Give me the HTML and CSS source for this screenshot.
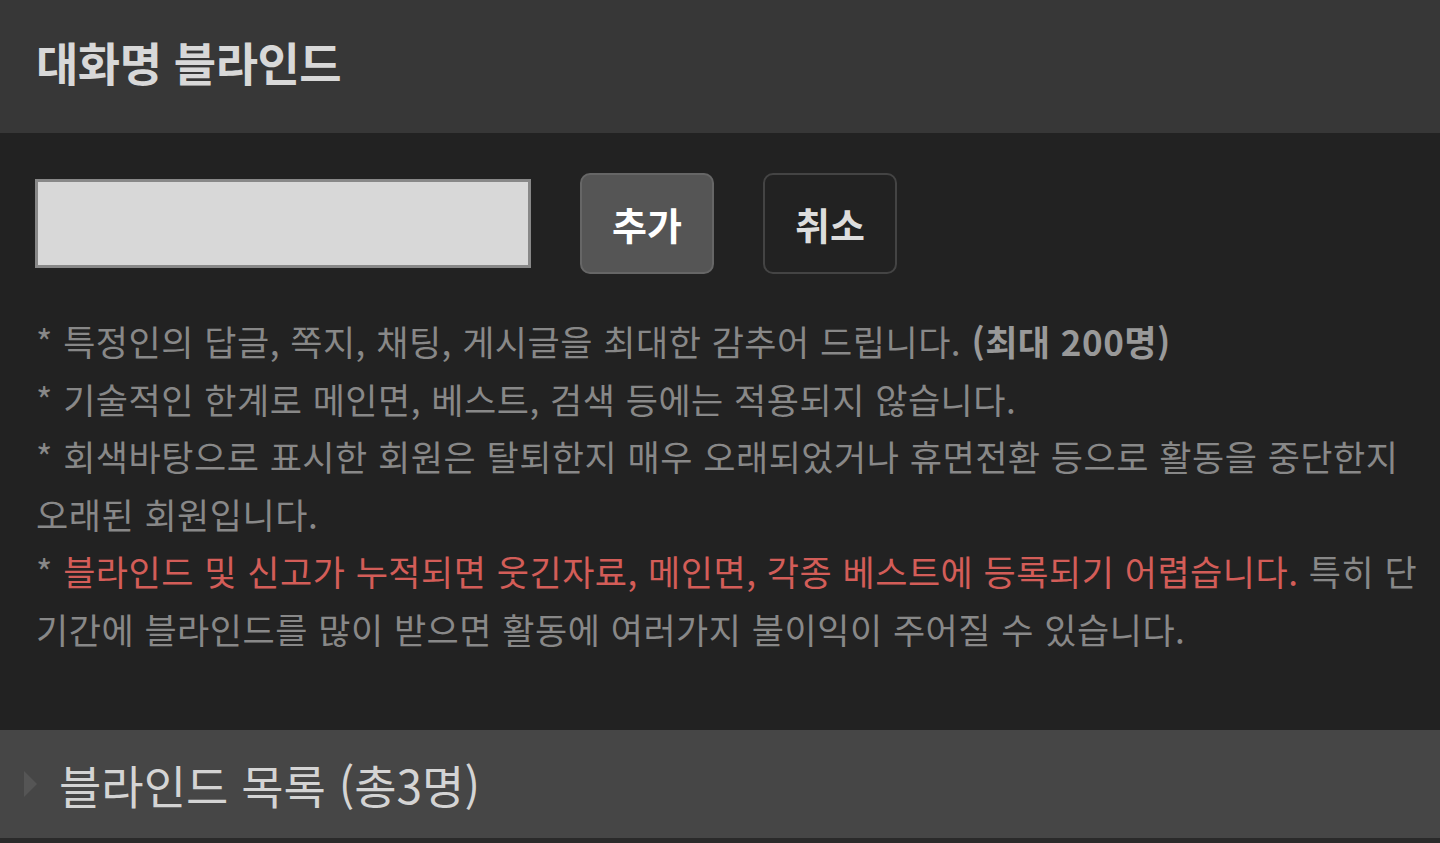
FILE: index.html
```html
<!DOCTYPE html>
<html lang="ko">
  <head>
    <meta charset="UTF-8">
    <title>대화명 블라인드</title>
    <link rel="stylesheet" href="styles.css">
  </head>
  <body>
    <div class="pageHead">대화명 블라인드</div>
    <div class="blindBox">
        <div class="blindForm">
            <input class="blindInput" type="text">
            <button class="btnAdd">추가</button>
            <button class="btnCancel">취소</button>
        </div>
        <div class="blindHelp">
            <p>* 특정인의 답글, 쪽지, 채팅, 게시글을 최대한 감추어 드립니다. <b>(최대 200명)</b></p>
            <p>* 기술적인 한계로 메인면, 베스트, 검색 등에는 적용되지 않습니다.</p>
            <p>* 회색바탕으로 표시한 회원은 탈퇴한지 매우 오래되었거나 휴면전환 등으로 활동을 중단한지 오래된 회원입니다.</p>
            <p>* <span class="warn">블라인드 및 신고가 누적되면 웃긴자료, 메인면, 각종 베스트에 등록되기 어렵습니다.</span> 특히 단기간에 블라인드를 많이 받으면 활동에 여러가지 불이익이 주어질 수 있습니다.</p>
        </div>
    </div>
    <div class="blindList">
        <span class="arrow"></span>
        <span>블라인드 목록 (총3명)</span>
    </div>
  </body>
</html>
```

FILE: styles.css
```css
body {
    margin: 0;
    background: #2a2a2a;
    font-family: "Noto Sans CJK KR", "Noto Sans", sans-serif;
}
.pageHead {
    height: 133px;
    box-sizing: border-box;
    display: flex;
    align-items: center;
    padding: 0 36px 12px 36px;
    background: #373737;
    color: #d8d8d8;
    font-size: 46px;
    font-weight: bold;
    letter-spacing: -0.5px;
}
.blindBox {
    background: #222222;
    padding: 40px 20px 73px 36px;
}
.blindForm {
    display: flex;
    align-items: center;
    gap: 49px;
}
.blindInput {
    width: 496px;
    height: 89px;
    box-sizing: border-box;
    margin: 0 0 0 -1px;
    background: #d8d8d8;
    border: 3px solid #888888;
    border-radius: 0;
}
.blindForm button {
    width: 134px;
    height: 101px;
    border-radius: 10px;
    font-family: "Noto Sans CJK KR", sans-serif;
    font-size: 38px;
    font-weight: bold;
}
.btnAdd {
    background: #555555;
    border: 2px solid #666666;
    color: #ffffff;
}
.btnCancel {
    background: #222222;
    border: 2px solid #444444;
    color: #dddddd;
}
.blindHelp {
    margin-top: 38px;
    color: #888888;
    font-size: 35px;
    line-height: 57.5px;
    letter-spacing: 0.5px;
}
.blindHelp p {
    margin: 0;
}
.blindHelp b {
    color: #999999;
}
.warn {
    color: #d35d58;
}
.blindList {
    height: 108px;
    display: flex;
    align-items: center;
    gap: 22px;
    padding: 0 24px;
    background: #464646;
    color: #d4d4d4;
    font-size: 46px;
}
.arrow {
    width: 0;
    height: 0;
    border-top: 13px solid transparent;
    border-bottom: 13px solid transparent;
    border-left: 13px solid #555555;
}
```
